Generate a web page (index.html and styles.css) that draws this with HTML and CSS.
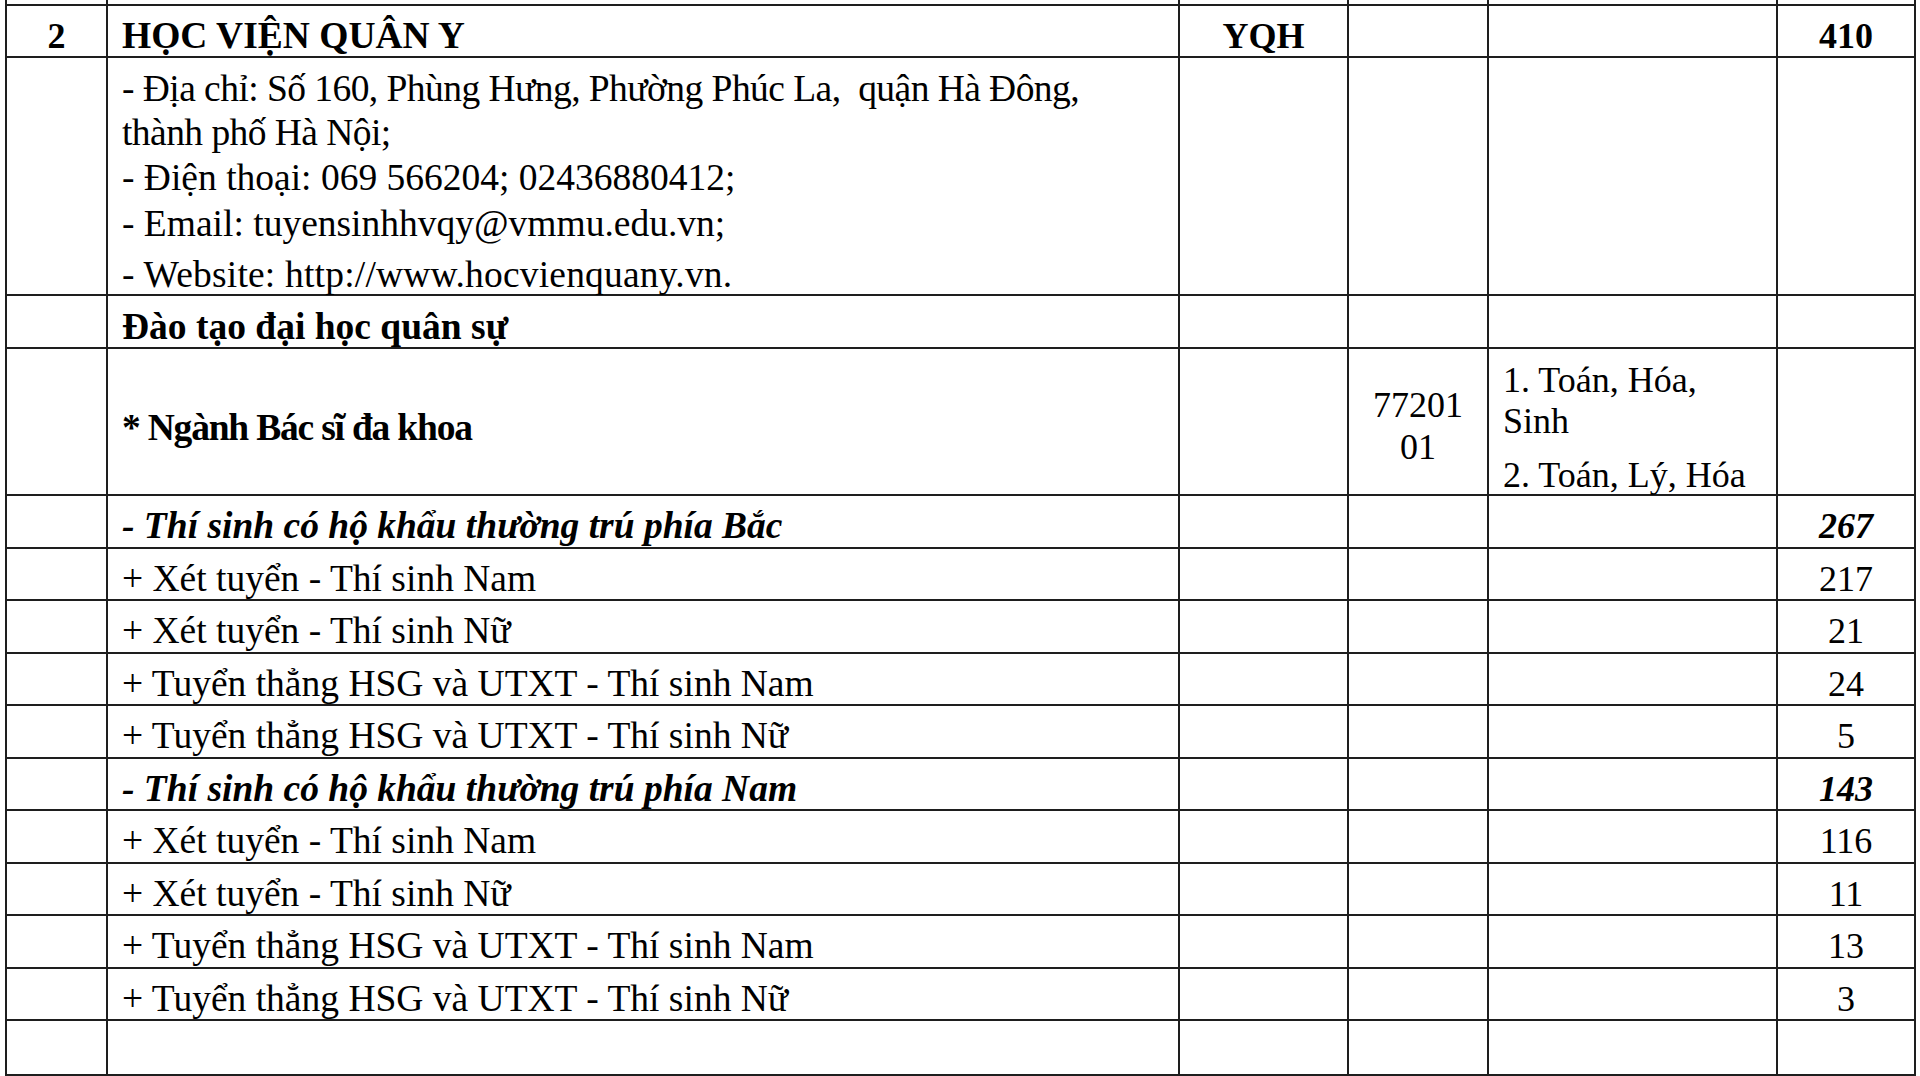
FILE: index.html
```html
<!DOCTYPE html>
<html lang="vi">
<head>
<meta charset="utf-8">
<title>Học viện Quân y</title>
<link rel="stylesheet" href="styles.css">
</head>
<body>
<table class="sheet">
  <colgroup>
    <col class="c-stt">
    <col class="c-name">
    <col class="c-code">
    <col class="c-major">
    <col class="c-subj">
    <col class="c-quota">
  </colgroup>
  <tbody>
    <tr class="stub"><td></td><td></td><td></td><td></td><td></td><td></td></tr>
    <tr class="r52">
      <td class="center bold">2</td>
      <td class="name bold">HỌC VIỆN QUÂN Y</td>
      <td class="center bold">YQH</td>
      <td></td>
      <td></td>
      <td class="center bold">410</td>
    </tr>
    <tr class="r-addr">
      <td></td>
      <td class="name addr">
        <div class="addr-box">
          <div class="addr-l1">- Địa chỉ: Số 160, Phùng Hưng, Phường Phúc La,&nbsp; quận Hà Đông,</div>
          <div class="addr-l2">thành phố Hà Nội;</div>
          <div class="addr-l3">- Điện thoại: 069 566204; 02436880412;</div>
          <div class="addr-l4">- Email: tuyensinhhvqy@vmmu.edu.vn;</div>
          <div class="addr-l5">- Website: http://www.hocvienquany.vn.</div>
        </div>
      </td>
      <td></td>
      <td></td>
      <td></td>
      <td></td>
    </tr>
    <tr class="r53">
      <td></td>
      <td class="name bold">Đào tạo đại học quân sự</td>
      <td></td>
      <td></td>
      <td></td>
      <td></td>
    </tr>
    <tr class="r-major">
      <td></td>
      <td class="name bold mid tight">* Ngành Bác sĩ đa khoa</td>
      <td></td>
      <td class="center mid code">77201<br>01</td>
      <td class="subj"><p>1. Toán, Hóa,<br>Sinh</p><p>2. Toán, Lý, Hóa</p></td>
      <td></td>
    </tr>
    <tr class="r-line">
      <td></td>
      <td class="name bold italic">- Thí sinh có hộ khẩu thường trú phía Bắc</td>
      <td></td><td></td><td></td>
      <td class="center bold italic">267</td>
    </tr>
    <tr class="r-line">
      <td></td>
      <td class="name">+ Xét tuyển - Thí sinh Nam</td>
      <td></td><td></td><td></td>
      <td class="center">217</td>
    </tr>
    <tr class="r-line">
      <td></td>
      <td class="name">+ Xét tuyển - Thí sinh Nữ</td>
      <td></td><td></td><td></td>
      <td class="center">21</td>
    </tr>
    <tr class="r-line">
      <td></td>
      <td class="name">+ Tuyển thẳng HSG và UTXT - Thí sinh Nam</td>
      <td></td><td></td><td></td>
      <td class="center">24</td>
    </tr>
    <tr class="r-line">
      <td></td>
      <td class="name">+ Tuyển thẳng HSG và UTXT - Thí sinh Nữ</td>
      <td></td><td></td><td></td>
      <td class="center">5</td>
    </tr>
    <tr class="r-line">
      <td></td>
      <td class="name bold italic">- Thí sinh có hộ khẩu thường trú phía Nam</td>
      <td></td><td></td><td></td>
      <td class="center bold italic">143</td>
    </tr>
    <tr class="r-line">
      <td></td>
      <td class="name">+ Xét tuyển - Thí sinh Nam</td>
      <td></td><td></td><td></td>
      <td class="center">116</td>
    </tr>
    <tr class="r-line">
      <td></td>
      <td class="name">+ Xét tuyển - Thí sinh Nữ</td>
      <td></td><td></td><td></td>
      <td class="center">11</td>
    </tr>
    <tr class="r-line">
      <td></td>
      <td class="name">+ Tuyển thẳng HSG và UTXT - Thí sinh Nam</td>
      <td></td><td></td><td></td>
      <td class="center">13</td>
    </tr>
    <tr class="r-line">
      <td></td>
      <td class="name">+ Tuyển thẳng HSG và UTXT - Thí sinh Nữ</td>
      <td></td><td></td><td></td>
      <td class="center">3</td>
    </tr>
    <tr class="r-end">
      <td></td><td></td><td></td><td></td><td></td><td></td>
    </tr>
  </tbody>
</table>
</body>
</html>
```

FILE: styles.css
```css
html, body {
  margin: 0;
  padding: 0;
  background: #ffffff;
}

body {
  font-family: "Liberation Serif", "Times New Roman", serif;
  font-size: 36px;
  color: #000000;
  overflow: hidden;
}

.sheet {
  border-collapse: collapse;
  table-layout: fixed;
  width: 1909px;
  margin-left: 5px;
}

.c-stt { width: 101px; }
.c-name { width: 1072px; }
.c-code { width: 169px; }
.c-major { width: 140px; }
.c-subj { width: 289px; }
.c-quota { width: 138px; }

.sheet td {
  border: 2px solid #1e1e1e;
  padding: 10px 14px 0 14px;
  vertical-align: top;
  line-height: 40px;
  white-space: nowrap;
  overflow: visible;
}

.sheet td.name {
  font-size: 37.5px;
}

.stub td {
  border-top: none;
  padding: 0;
  height: 4px;
  line-height: 0;
}

.r52 { height: 52px; }
.r-addr { height: 238px; }
.r53 { height: 53px; }
.r-major { height: 147px; }
.r-line { height: 52.5px; }
.r-end { height: 55px; }

.r53 td { padding-top: 11px; }

.center { text-align: center; }
.bold { font-weight: bold; }
.italic { font-style: italic; }

.sheet td.addr {
  padding-top: 9.5px;
  line-height: 42.4px;
}

.addr-box {
  height: 220px;
  overflow: visible;
}

.addr-l1 { letter-spacing: -0.55px; }
.addr-l2 { letter-spacing: -0.55px; margin-top: 2px; }
.addr-l3 { margin-top: 2.4px; }
.addr-l4 { margin-top: 4.2px; }
.addr-l5 { margin-top: 8.3px; letter-spacing: 0.2px; }

.sheet td.mid {
  vertical-align: middle;
  padding-top: 12px;
}

.sheet td.tight {
  letter-spacing: -1.2px;
}

.sheet td.code {
  line-height: 42px;
  padding-top: 9px;
  padding-left: 4px;
  padding-right: 4px;
}

.sheet td.subj {
  padding-top: 11px;
  line-height: 41px;
}

.subj p {
  margin: 0;
}

.subj p + p {
  margin-top: 15px;
  line-height: 36px;
}
```
